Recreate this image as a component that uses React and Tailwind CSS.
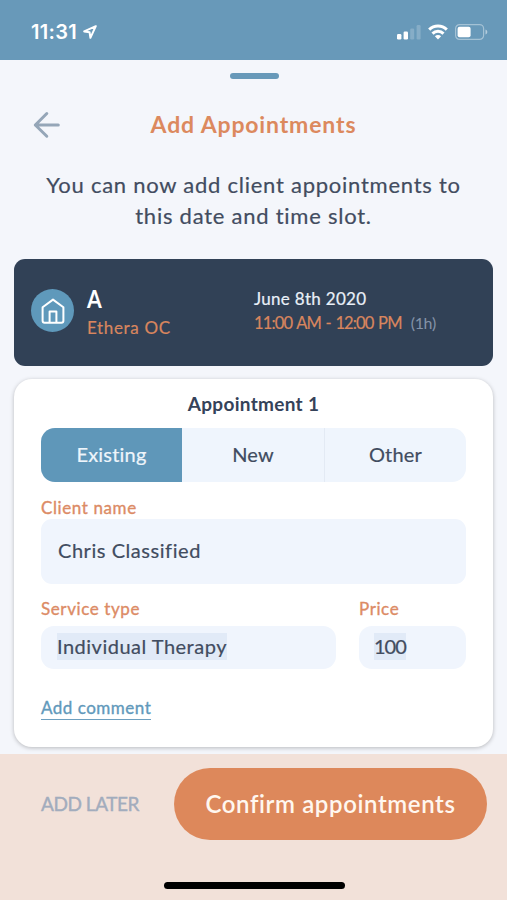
// src/App.jsx
const tabs = [
  { label: 'Existing', active: true },
  { label: 'New' },
  { label: 'Other' },
]

function StatusBar() {
  return (
    <header className="flex h-[60px] shrink-0 items-center justify-between bg-[#6899b9] pt-1 pl-[31px] pr-[19px] text-white">
      <div className="flex items-center gap-[6px]">
        <span className="font-[Inter] text-[20px] leading-none font-semibold tracking-[0.3px]">11:31</span>
        <svg width="14" height="14" viewBox="0 0 14 14" fill="none" stroke="currentColor" strokeWidth="2" strokeLinejoin="round">
          <path d="M12.8 1.2 1.2 6.4l5.4.9.8 5.5z" />
        </svg>
      </div>
      <div className="flex items-center gap-[7px]">
        <svg width="24" height="16" viewBox="0 0 24 16" fill="currentColor">
          <rect x="0" y="10" width="4.4" height="5.5" rx="1.2" />
          <rect x="6.6" y="7.5" width="4.4" height="8" rx="1.2" />
          <rect x="13.2" y="4.5" width="4" height="11" rx="1.2" opacity=".2" />
          <rect x="19.6" y="1" width="4" height="14.5" rx="1.2" opacity=".2" />
        </svg>
        <svg width="20" height="16" viewBox="0 0 20 16" fill="none" stroke="currentColor" strokeWidth="3">
          <path d="M1.2 5.6a12.4 12.4 0 0 1 17.6 0" />
          <path d="M4.5 9.6a7.8 7.8 0 0 1 11 0" />
          <path d="M10 15.6 6.9 12.3a4.4 4.4 0 0 1 6.2 0z" fill="currentColor" stroke="none" />
        </svg>
        <svg width="33" height="16" viewBox="0 0 33 16" fill="none">
          <rect x=".6" y=".6" width="28" height="14.8" rx="4" stroke="currentColor" strokeWidth="1.2" opacity=".4" />
          <rect x="2.6" y="2.7" width="13" height="10.6" rx="2" fill="currentColor" />
          <path d="M30.5 5.5c2.4.8 2.4 4.2 0 5z" fill="currentColor" opacity=".5" />
        </svg>
      </div>
    </header>
  )
}

function SlotCard() {
  return (
    <section className="mx-[14px] mt-[28px] flex h-[107px] shrink-0 rounded-[11px] bg-[#314156] pl-[17px]">
      <div className="mt-[30px] flex size-[43px] items-center justify-center rounded-full bg-[#5f99bb] text-white">
        <svg width="24" height="26" viewBox="0 0 24 26" fill="none" stroke="currentColor" strokeWidth="2" strokeLinejoin="round">
          <path d="M1.6 9.2 12 1.6l10.400 7.600V22.800a2 2 0 0 1-2 2H3.600a2 2 0 0 1-2-2z" />
          <path d="M8.600 24.800V13.500h6.800v11.300" />
        </svg>
      </div>
      <div className="ml-[13px] w-[167px] pt-[27px]">
        <h2 className="text-[25px] leading-[25px] font-bold text-white">
          <span className="inline-block origin-left scale-x-[0.85]">A</span>
        </h2>
        <p className="mt-[7px] text-[17px] leading-[20px] tracking-[0.65px] text-[#d9865e] [-webkit-text-stroke:0.2px]">Ethera OC</p>
      </div>
      <div className="pt-[28px] text-[17px] leading-[23.5px] whitespace-nowrap">
        <p className="tracking-[0.3px] text-[#e9f0f8] [-webkit-text-stroke:0.2px]">June 8th 2020</p>
        <p className="text-[#d9865e]">
          <span className="text-[16.5px] tracking-[-0.85px] [word-spacing:1.2px] [-webkit-text-stroke:0.2px]">11:00 AM - 12:00 PM</span>
          <span className="ml-[9px] text-[16px] tracking-[-0.3px] text-[#8493a8]">(1h)</span>
        </p>
      </div>
    </section>
  )
}

function Label({ children }) {
  return (
    <label className="block text-[17px] leading-[22px] tracking-[0.6px] text-[#dc8b65] [-webkit-text-stroke:0.35px]">
      {children}
    </label>
  )
}

function AppointmentForm() {
  return (
    <section className="mx-[14px] mt-[13px] flex h-[368px] shrink-0 flex-col rounded-[18px] bg-white px-[27px] text-[#414c60] shadow-[0_1px_4px_rgba(0,0,0,0.25)]">
      <h3 className="mt-[13px] text-center text-[19px] leading-[24px] font-bold tracking-[0.3px] text-[#354259]">Appointment 1</h3>

      <div className="mt-[12px] grid h-[54px] grid-cols-[141px_142px_142px] overflow-hidden rounded-[14px] bg-[#eff5fd] text-[20px] tracking-[0.2px] [-webkit-text-stroke:0.2px]">
        {tabs.map((t, i) => (
          <button
            key={t.label}
            className={`pb-[3px] ${t.active ? 'bg-[#5f97b9] text-[#eef5fb]' : ''} ${i === 2 ? 'border-l border-[#e3eaf4]' : ''}`}
          >
            {t.label}
          </button>
        ))}
      </div>

      <div className="mt-[15px]">
        <Label>Client name</Label>
        <div className="flex h-[65px] items-center rounded-[11px] bg-[#f0f5fd] pb-[3px] pl-[17px] text-[20px] tracking-[0.55px] [-webkit-text-stroke:0.2px]">
          Chris Classified
        </div>
      </div>

      <div className="mt-[14px] flex gap-[23px] [-webkit-text-stroke:0.2px]">
        <div className="w-[295px]">
          <Label>Service type</Label>
          <div className="mt-[6px] flex h-[43px] items-center rounded-[13px] bg-[#f0f5fd] pb-[2px] pl-[16px] text-[20px] tracking-[0.5px]">
            <span className="bg-[#e1eaf7] leading-[27px]">Individual Therapy</span>
          </div>
        </div>
        <div className="flex-1">
          <Label>Price</Label>
          <div className="mt-[6px] flex h-[43px] items-center rounded-[13px] bg-[#f0f5fd] pb-[2px] pl-[15px] text-[20px] tracking-[-1px]">
            <span className="bg-[#e1eaf7] leading-[27px]">100</span>
          </div>
        </div>
      </div>

      <a className="mt-[27px] self-start border-b border-[#6d9fbf] text-[17px] leading-[23px] tracking-[0.5px] text-[#6199bb] [-webkit-text-stroke:0.35px]">Add comment</a>
    </section>
  )
}

export default function App() {
  return (
    <div className="flex h-[900px] w-[507px] flex-col overflow-hidden bg-[#f4f6fb] font-[Lato,sans-serif]">
      <StatusBar />

      <div className="ml-[230px] mt-[13px] h-[6px] w-[49px] shrink-0 rounded-full bg-[#6899b9]" />

      <div className="mt-[30px] grid h-[30px] shrink-0 grid-cols-[80px_1fr_80px] items-center">
        <svg className="mt-[2px] ml-[33px]" width="28" height="28" viewBox="0 0 28 28" fill="none" stroke="#95a6b8" strokeWidth="3" strokeLinecap="round" strokeLinejoin="round">
          <path d="M13.8 2.5 2.3 14l11.5 11.2M2.3 14h23" />
        </svg>
        <h1 className="text-center text-[23px] leading-[30px] font-bold tracking-[0.85px] text-[#dc895e]">Add Appointments</h1>
      </div>

      <p className="mt-[31px] shrink-0 text-center text-[22px] leading-[30.5px] tracking-[0.75px] text-[#424c60] [-webkit-text-stroke:0.2px]">
        You can now add client appointments to
        <br />
        this date and time slot.
      </p>

      <SlotCard />
      <AppointmentForm />

      <footer className="mt-[7px] flex flex-1 flex-col bg-[#f2e1d9]">
        <div className="mt-[14px] flex items-center pl-[41px]">
          <button className="w-[133px] text-left text-[19px] tracking-[-0.45px] text-[#a2acbd] [-webkit-text-stroke:0.4px]">ADD LATER</button>
          <button className="h-[72px] w-[313px] rounded-full bg-[#dd885b] text-[24px] font-semibold tracking-[0.6px] text-[#fff7ef]">Confirm appointments</button>
        </div>
        <div className="mt-[42px] ml-[164px] h-[7px] w-[181px] rounded-full bg-black" />
      </footer>
    </div>
  )
}
